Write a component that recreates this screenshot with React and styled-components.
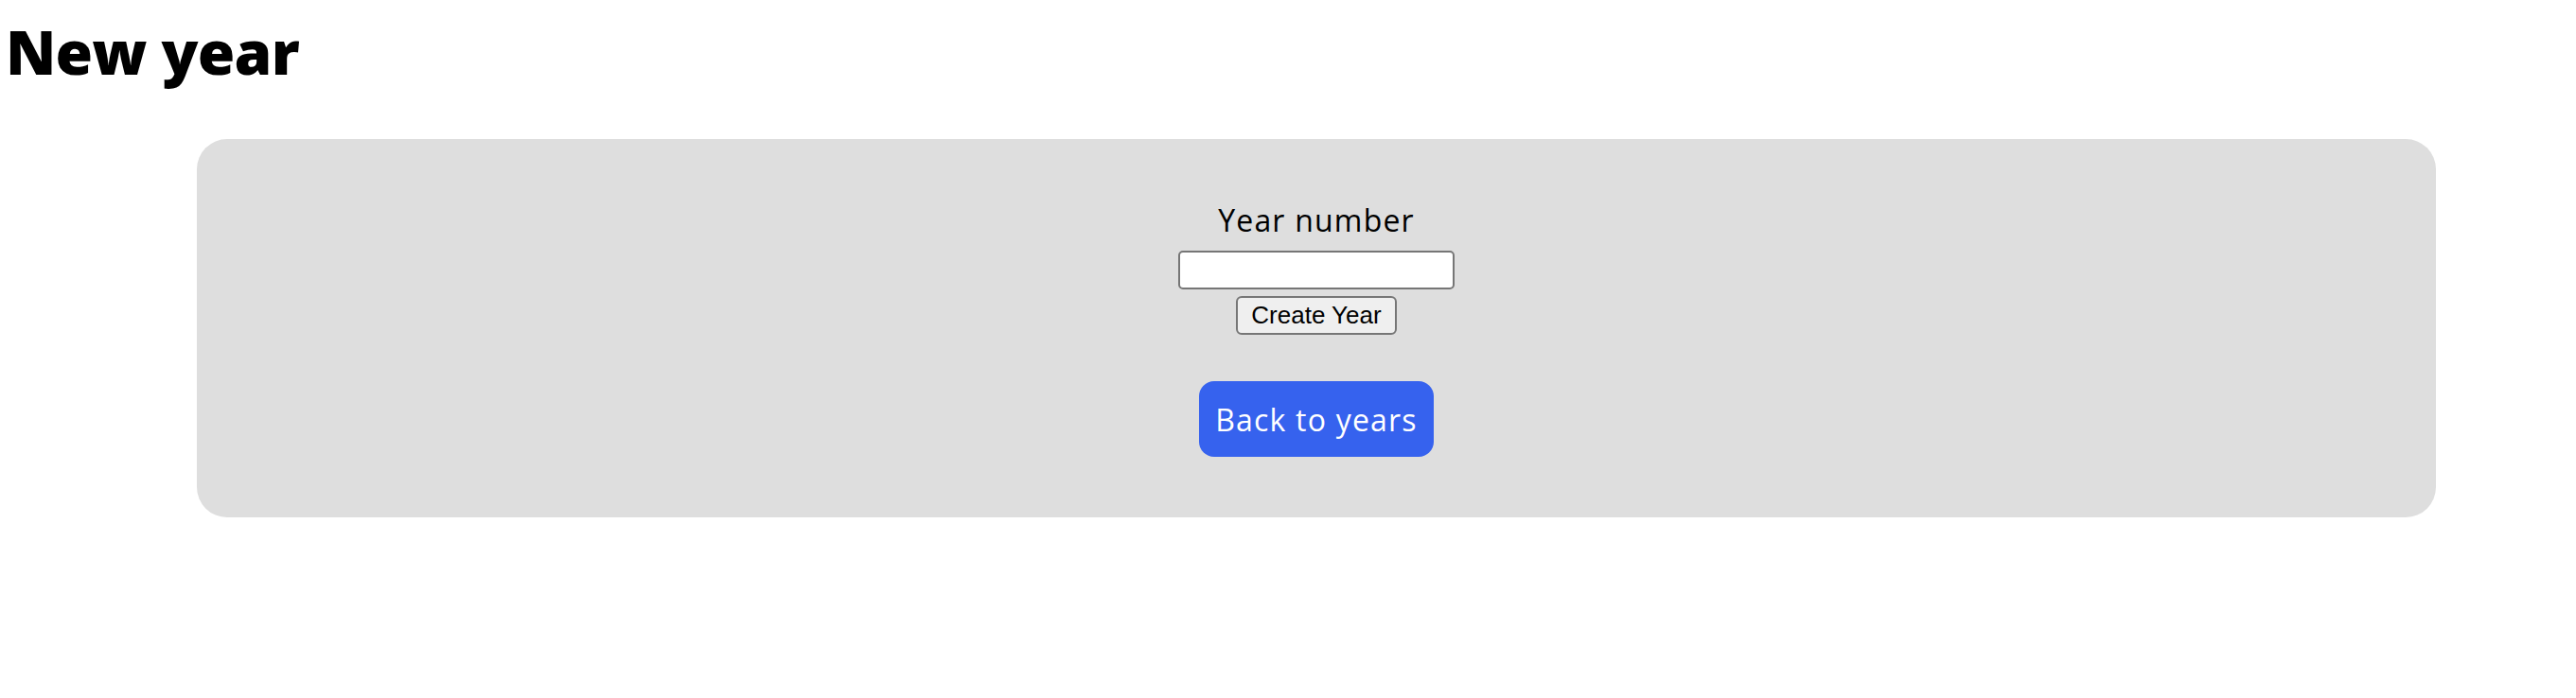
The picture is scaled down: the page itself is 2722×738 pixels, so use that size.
import React from 'react'
import styled, { createGlobalStyle } from 'styled-components'

const GlobalStyle = createGlobalStyle`
    body {
        margin: 0;
        background: #ffffff;
        font-family: "Open Sans", "Liberation Sans", sans-serif;
        color: #000000;
    }
`

const Title = styled.h1`
    margin: 0;
    padding: 23px 0 0 6px;
    font-size: 64px;
    line-height: 64px;
    font-weight: 800;
    letter-spacing: -0.8px;
`

const Card = styled.div`
    margin: 60px 148px 0 208px;
    padding: 62px 0 64px;
    background-color: #dedede;
    border-radius: 32px;
    display: flex;
    flex-direction: column;
    align-items: center;
`

const Form = styled.form`
    display: flex;
    flex-direction: column;
    align-items: center;
`

const Label = styled.label`
    font-size: 32px;
    line-height: 48px;
    letter-spacing: 1.2px;
    margin-bottom: 8px;
`

const Input = styled.input`
    box-sizing: border-box;
    width: 292px;
    height: 41px;
    border: 2px solid #767676;
    border-radius: 5px;
    background: #ffffff;
    margin: 0 0 7px;
`

const SubmitButton = styled.button`
    box-sizing: border-box;
    width: 170px;
    height: 41px;
    padding: 0;
    border: 2px solid #767676;
    border-radius: 6px;
    background: #efefef;
    font-family: "Liberation Sans", Arial, sans-serif;
    font-size: 26px;
    color: #000000;
`

const BackButton = styled.a`
    margin-top: 49px;
    height: 80px;
    padding: 0 17px;
    display: flex;
    align-items: center;
    background-color: #3662ee;
    border-radius: 16px;
    color: #ffffff;
    font-size: 32px;
    letter-spacing: 1.2px;
    text-decoration: none;
`

export default function App() {
    return (
        <>
            <GlobalStyle />
            <Title>New year</Title>
            <Card>
                <Form onSubmit={e => e.preventDefault()}>
                    <Label htmlFor="year">Year number</Label>
                    <Input id="year" type="text" />
                    <SubmitButton type="submit">Create Year</SubmitButton>
                </Form>
                <BackButton href="#">Back to years</BackButton>
            </Card>
        </>
    )
}
